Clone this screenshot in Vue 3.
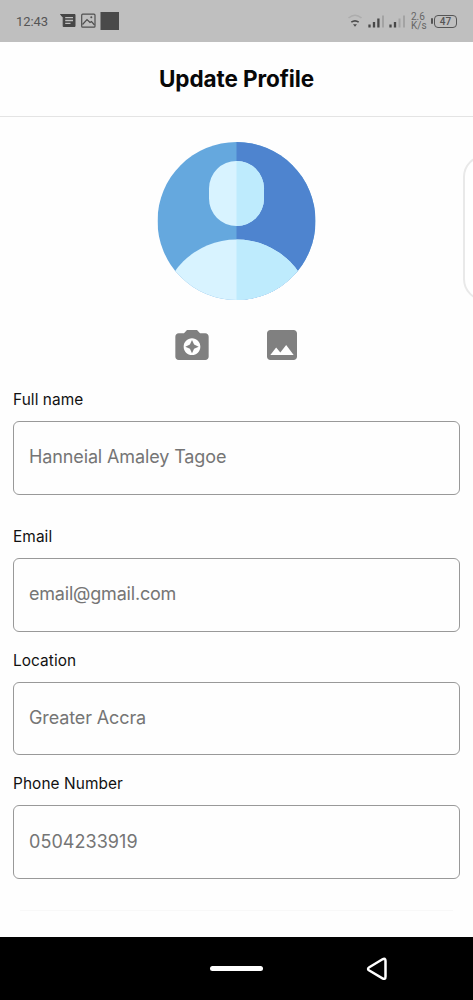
<script setup>
const fields = [
  { id: 'name', label: 'Full name', value: 'Hanneial Amaley Tagoe' },
  { id: 'email', label: 'Email', value: 'email@gmail.com' },
  { id: 'location', label: 'Location', value: 'Greater Accra' },
  { id: 'phone', label: 'Phone Number', value: '0504233919' },
]
</script>

<template>
  <div class="screen">
    <header class="status">
      <span class="time">12:43</span>
      <svg class="notifs" width="60" height="20" viewBox="0 0 60 20">
        <path d="M.5 3.500H15V15.500H3.200V6.500Z" fill="#464646" stroke="#464646" stroke-linejoin="round" />
        <path d="M5.200 6.600H13M5.200 9.500H13M5.200 12.400H10.500" stroke="#bfbfbf" stroke-width="1.300" />
        <rect x="21.700" y="3.200" width="13.300" height="13" rx="1" fill="none" stroke="#505050" stroke-width="1.200" />
        <path d="M22.500 13.500L27 8.500L30 11.500L31.500 10.500L34.500 14" fill="none" stroke="#505050" stroke-width="1.200" />
        <circle cx="31.300" cy="6.300" r="1" fill="#505050" />
        <rect x="40.500" y="1" width="18.500" height="18" fill="#4a4a4a" />
      </svg>
      <svg class="signals" width="60" height="18" viewBox="0 0 60 18">
        <path d="M.5 6Q7 .5 13.500 6" fill="none" stroke="#adadad" stroke-width="1.600" />
        <path d="M3.300 10.200Q7 7.500 10.700 10.200" fill="none" stroke="#4c4c4c" stroke-width="1.600" />
        <path d="M5 12.300H9L7 14.800Z" fill="#4c4c4c" />
        <path d="M21.500 15.500V12.500M26 15.500V10M30.400 15.500V6.500" stroke="#484848" stroke-width="2.300" />
        <path d="M35 15.500V3.500" stroke="#a3a3a3" stroke-width="2" />
        <path d="M42.500 15.500V12.500M47 15.500V10" stroke="#484848" stroke-width="2.300" />
        <path d="M51.500 15.500V6.500M56 15.500V3.500" stroke="#a3a3a3" stroke-width="2" />
      </svg>
      <span class="speed">2.6<br>K/s</span>
      <span class="battery"><i></i><b>47</b></span>
    </header>

    <div class="title"><h1>Update Profile</h1></div>

    <main>
      <svg class="avatar" width="159" height="158" viewBox="-0.5 0 159 158">
        <defs>
          <clipPath id="round"><circle cx="79" cy="79" r="79" /></clipPath>
          <clipPath id="half"><rect x="79" y="0" width="79" height="158" /></clipPath>
        </defs>
        <g clip-path="url(#round)">
          <rect width="158" height="158" fill="#65a8de" />
          <rect x="79" width="79" height="158" fill="#4e84cf" />
          <g fill="#d8f3ff">
            <rect x="51.500" y="19" width="55" height="65" rx="27.500" />
            <circle cx="79" cy="173" r="75.500" />
          </g>
          <g fill="#beebfd" clip-path="url(#half)">
            <rect x="51.500" y="19" width="55" height="65" rx="27.500" />
            <circle cx="79" cy="173" r="75.500" />
          </g>
        </g>
      </svg>

      <div class="actions">
        <svg width="40" height="40" viewBox="0 0 24 24">
          <path d="M9 3L7.170 5H4c-1.100 0-2 .9-2 2v12c0 1.100.9 2 2 2h16c1.100 0 2-.9 2-2V7c0-1.100-.9-2-2-2h-3.170L15 3H9zm3 15c-2.760 0-5-2.240-5-5s2.240-5 5-5 5 2.240 5 5-2.240 5-5 5z" />
          <path d="M12 17l1.250-2.750L16 13l-2.750-1.250L12 9l-1.250 2.750L8 13l2.750 1.250z" />
        </svg>
        <svg width="40" height="40" viewBox="0 0 24 24">
          <path d="M21 19V5c0-1.100-.9-2-2-2H5c-1.100 0-2 .9-2 2v14c0 1.100.9 2 2 2h14c1.100 0 2-.9 2-2zM8.500 13.500l2.500 3.010L14.500 12l4.500 6H5l3.500-4.500z" />
        </svg>
      </div>

      <form>
        <div v-for="f in fields" :key="f.id" class="field" :class="f.id">
          <label :for="f.id">{{ f.label }}</label>
          <input :id="f.id" type="text" :placeholder="f.value">
        </div>
      </form>
      <div class="rule"></div>
    </main>

    <div class="edge-panel"></div>

    <nav>
      <span class="home"></span>
      <svg class="back" width="24" height="26" viewBox="0 0 24 26">
        <path d="M3.300 11.300L16.500 3.300Q19.500 1.700 19.500 5V20.500Q19.500 24 16.500 22.300L3.300 14.500Q.8 12.900 3.300 11.300Z" fill="none" stroke="#fff" stroke-width="2.500" />
      </svg>
    </nav>
  </div>
</template>

<style>
body { margin: 0; }
</style>

<style scoped>
.screen {
  position: relative;
  display: flex;
  flex-direction: column;
  width: 473px;
  height: 1000px;
  overflow: hidden;
  background: #fefefe;
  font-family: Inter, "Liberation Sans", sans-serif;
}
.status {
  display: flex;
  align-items: center;
  box-sizing: border-box;
  height: 42px;
  padding: 0 16px;
  background: #bfbfbf;
  color: #555;
  font-family: Roboto, sans-serif;
}
.time { width: 44px; font-size: 13px; letter-spacing: -.1px; }
.notifs { flex: none; }
.signals { flex: none; margin-left: 228px; }
.speed { width: 16px; margin-left: 3px; font-size: 10px; line-height: 9px; color: #666; white-space: nowrap; }
.battery { display: flex; align-items: center; gap: 1px; margin-left: 4px; }
.battery i { width: 2px; height: 6px; background: #555; border-radius: 1px; }
.battery b {
  box-sizing: border-box;
  width: 23px;
  height: 13px;
  border: 1.5px solid #555;
  border-radius: 4px;
  font-size: 10px;
  line-height: 11px;
  font-weight: 500;
  text-align: center;
}
.title {
  display: flex;
  align-items: center;
  justify-content: center;
  box-sizing: border-box;
  height: 75px;
  border-bottom: 1px solid #e4e4e4;
}
h1 { margin: 0; padding-bottom: 1px; color: #080808; font-size: 22.5px; line-height: 28px; font-weight: 700; letter-spacing: -.1px; }
main { display: flex; flex-direction: column; flex: 1; align-items: center; }
.avatar { flex: none; margin-top: 25px; }
.actions { display: flex; gap: 50px; margin-top: 25px; fill: #808080; }
form { display: flex; flex-direction: column; width: 447px; margin-top: 25px; }
.field { display: flex; flex-direction: column; height: 123.700px; }
.field.name { height: 137px; }
.field.phone { height: 105px; }
label { height: 31px; font-size: 15.4px; line-height: 20px; color: #111; letter-spacing: .08px; }
input {
  box-sizing: border-box;
  width: 100%;
  height: 73.500px;
  padding: 0 15px 2px;
  border: 1px solid #999;
  border-radius: 6px;
  outline: none;
  background: transparent;
  font: 400 18px Inter, sans-serif;
  letter-spacing: -.12px;
}
.email input { letter-spacing: -.2px; }
.phone input { letter-spacing: .05px; }
input::placeholder { color: #757575; opacity: 1; }
.rule { width: 433px; height: 1px; margin-top: 31px; background: #f8f8f8; }
.edge-panel {
  position: absolute;
  top: 155px;
  left: 463px;
  width: 80px;
  height: 146px;
  box-sizing: border-box;
  border: 2px solid #e9e9e9;
  border-radius: 22px;
  background: #fff;
}
nav { display: flex; align-items: center; height: 63px; background: #000; }
.home { width: 53px; height: 5px; margin-left: 210px; border-radius: 3px; background: #fff; }
.back { margin-left: 103px; }
</style>
